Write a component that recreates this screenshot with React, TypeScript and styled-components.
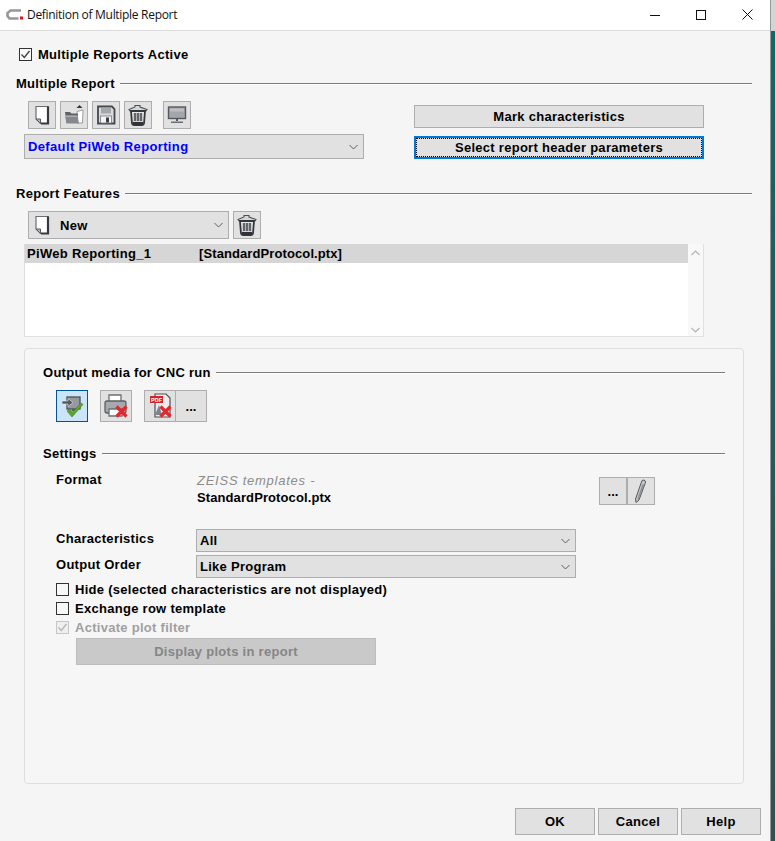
import * as React from 'react';
import styled, { createGlobalStyle } from 'styled-components';

const GlobalStyle = createGlobalStyle`
  html, body {
    margin: 0;
    padding: 0;
    background: #f5f5f5;
  }
  body {
    font-family: "Liberation Sans", Arial, sans-serif;
  }
`;

const NewIcon = ({ size = 20 }: { size?: number }) => (
  <svg width={size} height={size} viewBox="0 0 20 20">
    <path d="M4 1.500h12v17H8.500L4 14z" fill="#fff" stroke="#6a6d72" strokeWidth="1.200" />
    <path d="M16 1.500v17H9" fill="none" stroke="#35383c" strokeWidth="2.200" />
    <path d="M4 14h4.500v4.500z" fill="#b4b7bb" stroke="#55585c" strokeWidth="1" />
  </svg>
);

const OpenIcon = () => (
  <svg width="22" height="22" viewBox="0 0 22 22">
    <path d="M16.500 1l3 3h-6z" fill="#33363a" />
    <path d="M14 7.500l6-1.500-.5 13H14z" fill="#fff" stroke="#85898e" strokeWidth=".8" />
    <path d="M2 8h5l1.500 1.500H15V19H3.500z" fill="#5f6368" />
    <path d="M2 11.500h12.500L16 19.500H3.500z" fill="#85898e" />
    <path d="M2 11.500h12.500l.3 1.500H2.200z" fill="#a9acb0" />
  </svg>
);

const SaveIcon = () => (
  <svg width="20" height="20" viewBox="0 0 20 20">
    <path d="M2 1.500h14l2.500 2.500v14.500H2z" fill="#d9dadc" stroke="#44474c" strokeWidth="1.800" />
    <rect x="5" y="2.500" width="10" height="6" fill="#a3a6ab" />
    <rect x="4.500" y="11" width="11" height="7" fill="#f4f4f4" stroke="#75797e" strokeWidth=".8" />
    <rect x="10" y="12.500" width="3" height="5" fill="#3a3d42" />
  </svg>
);

const TrashIcon = () => (
  <svg width="20" height="22" viewBox="0 0 20 22">
    <path d="M1 5.500L7 3V1.500h5V3l7 2.500-1 1.500H2z" fill="#d6d7d9" stroke="#4c4f54" strokeWidth="1.100" />
    <path d="M3 7h14l-1 12.500q-.2 1.500-2 1.500H6q-1.800 0-2-1.500z" fill="#e8e8e8" stroke="#33363a" strokeWidth="1.800" />
    <path d="M7 9v8M10 9v8M13 9v8" stroke="#62666b" strokeWidth="2.400" />
    <path d="M5 19h10" stroke="#2e3135" strokeWidth="2.200" />
  </svg>
);

const MonitorIcon = () => (
  <svg width="20" height="20" viewBox="0 0 20 20">
    <rect x="1.500" y="2" width="17" height="11.500" fill="#a3a6aa" stroke="#55585c" strokeWidth="1.400" />
    <rect x="3" y="3.500" width="14" height="3" fill="#bdbfc2" />
    <path d="M9 14h2v2H9z" fill="#55585c" />
    <path d="M4 16.500h12v1.500H4z" fill="#6a6d72" />
  </svg>
);

const ScreenOkIcon = () => (
  <svg width="28" height="28" viewBox="0 0 28 28">
    <rect x="9" y="5" width="13" height="12" fill="#96999e" stroke="#4d5055" strokeWidth="1.300" />
    <path d="M4 9h6V6.500l5 4-5 4V12H4z" fill="#53575c" stroke="#eceef0" strokeWidth=".6" />
    <path d="M14 17h3v2h-3z" fill="#5b5f64" />
    <path d="M9 19l3-2 2.500 3.200L23 11l2 1.500L14 25z" fill="#5aa52c" stroke="#3f7f1c" strokeWidth=".6" />
  </svg>
);

const Cross = () => (
  <path d="M14.500 14.500L24.500 24.500M24.500 14.500L14.500 24.500" stroke="#dc2a30" strokeWidth="3.200" />
);

const PrinterOffIcon = () => (
  <svg width="28" height="28" viewBox="0 0 28 28">
    <path d="M7 3h12v7H7z" fill="#fff" stroke="#6b6f74" strokeWidth="1.300" />
    <path d="M3 11q0-2 2-2h17q2 0 2 2v8q0 2-2 2H5q-2 0-2-2z" fill="#a5a8ac" stroke="#5b5f64" strokeWidth="1.300" />
    <path d="M7 17h13v7H7z" fill="#fff" stroke="#6b6f74" strokeWidth="1.300" />
    <Cross />
  </svg>
);

const PdfOffIcon = () => (
  <svg width="28" height="28" viewBox="0 0 28 28">
    <path d="M9 2h11l4 4v19H9z" fill="#ececec" stroke="#4d5055" strokeWidth="1.200" />
    <rect x="4" y="4" width="13" height="7" fill="#d3232a" />
    <text x="10.500" y="9.800" textAnchor="middle" fontSize="5.500" fontWeight="700" fill="#fff" fontFamily="Liberation Sans">PDF</text>
    <path d="M9 23l4-10 3 10z" fill="#80848a" />
    <Cross />
  </svg>
);

const PencilIcon = () => (
  <svg width="20" height="26" viewBox="0 0 20 26">
    <path d="M11 2.500q2-1 3 .2t.1 2.800L8 22l-3 2.500-.5-3.500z" fill="#c4c6c9" stroke="#55585c" strokeWidth="1" />
    <path d="M11.500 6l1.500.8L7.500 21.500l-1.200-.6z" fill="#8c9095" />
  </svg>
);

const CheckMark = ({ $muted }: { $muted?: boolean }) => (
  <svg width="11" height="11" viewBox="0 0 11 11">
    <path d="M1.500 5.500l2.800 3L9.500 2" fill="none" stroke={$muted ? '#b5b5b5' : '#3f3f3f'} strokeWidth="1.300" />
  </svg>
);

const Chevron = () => (
  <svg width="9" height="6" viewBox="0 0 9 6">
    <path d="M.5 1l4 4 4-4" fill="none" stroke="#5f5f5f" strokeWidth="1" />
  </svg>
);

const Arrow = ({ $down }: { $down?: boolean }) => (
  <svg width="9" height="6" viewBox="0 0 9 6">
    <path d={$down ? 'M.5 1l4 4 4-4' : 'M.5 5l4-4 4 4'} fill="none" stroke="#b4b4b4" strokeWidth="1.200" />
  </svg>
);

const Page = styled.div`
  display: flex;
  width: 775px;
  height: 841px;
  overflow: hidden;
`;

const Window = styled.div`
  width: 770px;
  height: 841px;
  display: flex;
  flex-direction: column;
  background: #f5f5f5;
  color: #000;
  font-size: 13px;
  font-weight: 700;
  letter-spacing: 0.28px;
`;

const Desktop = styled.div`
  width: 5px;
  background: linear-gradient(#d4d4d4 0 31px, #0c6a66 31px, #34504f 100%);
  border-left: 1px solid #8f9a9a;
  box-sizing: border-box;
`;

const TitleBar = styled.div`
  height: 31px;
  flex: none;
  display: flex;
  align-items: center;
  background: #fff;
  border-bottom: 1px solid #dadada;
  box-sizing: border-box;
  padding: 0 0 1px 6px;
`;

const TitleLogo = styled.svg`
  width: 17px;
  height: 11px;
  margin-right: 4px;
`;

const TitleText = styled.span`
  font-family: "Open Sans", "Liberation Sans", sans-serif;
  font-size: 12px;
  font-weight: 400;
  letter-spacing: -0.3px;
  color: #111;
`;

const WindowControls = styled.div`
  margin-left: auto;
  display: flex;
`;

const WindowControl = styled.div`
  width: 46px;
  height: 29px;
  display: flex;
  align-items: center;
  justify-content: center;
`;

const Body = styled.div`
  flex: 1;
  display: flex;
  flex-direction: column;
  padding: 16px 18px 0 16px;
`;

const CheckRow = styled.label<{ $disabled?: boolean; $indent?: number; $height?: number }>`
  display: flex;
  align-items: center;
  gap: 6px;
  height: ${p => p.$height ?? 19}px;
  margin-left: ${p => p.$indent ?? 0}px;
  color: ${p => (p.$disabled ? '#a0a0a0' : '#000')};
`;

const Box = styled.span<{ $disabled?: boolean }>`
  width: 13px;
  height: 13px;
  box-sizing: border-box;
  background: ${p => (p.$disabled ? '#efefef' : '#f8f8f8')};
  border: 1px solid ${p => (p.$disabled ? '#c6c6c6' : '#333')};
  display: flex;
  align-items: center;
  justify-content: center;
`;

const SectionHead = styled.div<{ $top: number }>`
  display: flex;
  align-items: center;
  gap: 5px;
  height: 16px;
  margin-top: ${p => p.$top}px;
  &::after {
    content: '';
    flex: 1;
    height: 1px;
    background: #7a7a7a;
    box-shadow: 0 1px 0 #fff;
  }
`;

const ReportGrid = styled.div`
  display: flex;
  justify-content: space-between;
  margin: 10px 48px 0 8px;
`;

const ToolColumn = styled.div`
  display: flex;
  flex-direction: column;
  gap: 5px;
`;

const Toolbar = styled.div`
  display: flex;
  gap: 4px;
  padding-left: 4px;
`;

const IconButton = styled.button<{ $size?: number; $active?: boolean; $gapLeft?: number }>`
  width: ${p => p.$size ?? 28}px;
  height: ${p => p.$size ?? 28}px;
  flex: none;
  padding: 0;
  margin-left: ${p => p.$gapLeft ?? 0}px;
  display: flex;
  align-items: center;
  justify-content: center;
  box-sizing: border-box;
  background: ${p => (p.$active ? '#cce4f7' : '#e1e1e1')};
  border: 1px solid ${p => (p.$active ? '#005499' : '#adadad')};
  color: #000;
  font: inherit;
`;

const Combo = styled.div<{ $width: number; $height?: number; $blue?: boolean }>`
  width: ${p => p.$width}px;
  height: ${p => p.$height ?? 23}px;
  box-sizing: border-box;
  display: flex;
  align-items: center;
  gap: 8px;
  padding: 0 5px 0 3px;
  background: #e1e1e1;
  border: 1px solid #adadad;
  color: ${p => (p.$blue ? '#0000ff' : '#000')};
  letter-spacing: ${p => (p.$blue ? '0.36px' : 'inherit')};
  & > svg:last-child {
    margin-left: auto;
  }
`;

const ActionColumn = styled.div`
  display: flex;
  flex-direction: column;
  gap: 8px;
  padding-top: 4px;
`;

const ActionButton = styled.button<{ $focused?: boolean; $disabled?: boolean; $width?: number; $height?: number }>`
  width: ${p => p.$width ?? 290}px;
  height: ${p => p.$height ?? 23}px;
  box-sizing: border-box;
  padding: 0;
  font: inherit;
  letter-spacing: inherit;
  color: ${p => (p.$disabled ? '#858585' : '#000')};
  background: ${p => (p.$disabled ? '#c9c9c9' : '#e1e1e1')};
  border: ${p => (p.$focused ? '2px solid #0078d7' : p.$disabled ? '1px solid #bdbdbd' : '1px solid #adadad')};
  outline: ${p => (p.$focused ? '1px dotted #000' : 'none')};
  outline-offset: ${p => (p.$focused ? '-3px' : '0')};
`;

const FeatureRow = styled.div`
  display: flex;
  gap: 4px;
  margin: 10px 0 0 12px;
`;

const ListBox = styled.div`
  width: 680px;
  height: 93px;
  margin: 5px 0 0 8px;
  box-sizing: border-box;
  display: flex;
  background: #fff;
  border: 1px solid #e0e0e0;
  border-top: none;
  border-left-color: #dcdcdc;
`;

const ListItems = styled.div`
  flex: 1;
`;

const ListRow = styled.div`
  height: 19px;
  display: flex;
  align-items: center;
  padding-left: 2px;
  background: #d6d6d6;
  color: #000;
  letter-spacing: 0.1px;
`;

const ListName = styled.span`
  width: 172px;
  letter-spacing: 0.32px;
`;

const Scroller = styled.div`
  width: 15px;
  flex: none;
  display: flex;
  flex-direction: column;
  justify-content: space-between;
  align-items: center;
  padding: 6px 0 3px;
  background: #f8f8f8;
`;

const Panel = styled.div`
  width: 720px;
  height: 436px;
  box-sizing: border-box;
  margin: 11px 0 0 8px;
  padding: 15px 18px 0 18px;
  border: 1px solid #dedede;
  border-radius: 4px;
  background: #f6f6f6;
  display: flex;
  flex-direction: column;
`;

const MediaRow = styled.div`
  display: flex;
  margin: 10px 0 0 13px;
`;

const MediaGroup = styled.div<{ $gapLeft?: number }>`
  display: flex;
  margin-left: ${p => p.$gapLeft ?? 0}px;
`;

const FormatRow = styled.div`
  display: grid;
  grid-template-columns: 141px 1fr auto;
  margin: 9px 70px 0 13px;
`;

const FieldLabel = styled.div`
  line-height: 20px;
`;

const TemplateName = styled.div`
  line-height: 17px;
  padding-top: 2px;
  letter-spacing: 0.1px;
`;

const TemplateSource = styled.div`
  color: #8c8c8c;
  font-style: italic;
  font-weight: 400;
  letter-spacing: 0.75px;
`;

const ButtonPair = styled.div`
  display: flex;
  margin-top: 7px;
`;

const SelectRow = styled.div<{ $top: number }>`
  display: flex;
  align-items: center;
  margin: ${p => p.$top}px 0 0 13px;
`;

const SelectLabel = styled.div`
  width: 140px;
  padding-bottom: 4px;
`;

const Checks = styled.div`
  margin: 2px 0 0 13px;
`;

const DisplayWrap = styled.div`
  margin: 1px 0 0 33px;
`;

const Footer = styled.div`
  display: flex;
  justify-content: flex-end;
  gap: 3px;
  margin: 24px -9px 0 0;
`;

const App = () => {
  return (
    <Page>
      <GlobalStyle />
      <Window>
        <TitleBar>
          <TitleLogo viewBox="0 0 17 11">
            <path d="M15 1.500H4.500L1.500 4v3l2 2.500h9" fill="none" stroke="#979797" strokeWidth="2.600" />
            <rect x="14" y="7.500" width="3" height="3" fill="#e01020" />
          </TitleLogo>
          <TitleText>Definition of Multiple Report</TitleText>
          <WindowControls>
            <WindowControl>
              <svg width="10" height="10" viewBox="0 0 10 10">
                <path d="M0 5.500h10" stroke="#111" strokeWidth="1" />
              </svg>
            </WindowControl>
            <WindowControl>
              <svg width="10" height="10" viewBox="0 0 10 10">
                <rect x=".5" y=".5" width="9" height="9" fill="none" stroke="#111" strokeWidth="1" />
              </svg>
            </WindowControl>
            <WindowControl>
              <svg width="11" height="11" viewBox="0 0 11 11">
                <path d="M.5.500l10 10M10.500.500l-10 10" stroke="#111" strokeWidth="1" />
              </svg>
            </WindowControl>
          </WindowControls>
        </TitleBar>
        <Body>
          <CheckRow $indent={3} $height={15}>
            <Box>
              <CheckMark />
            </Box>
            Multiple Reports Active
          </CheckRow>
          <SectionHead $top={13}>Multiple Report</SectionHead>
          <ReportGrid>
            <ToolColumn>
              <Toolbar>
                <IconButton><NewIcon /></IconButton>
                <IconButton><OpenIcon /></IconButton>
                <IconButton><SaveIcon /></IconButton>
                <IconButton><TrashIcon /></IconButton>
                <IconButton $gapLeft={7}><MonitorIcon /></IconButton>
              </Toolbar>
              <Combo $width={340} $height={25} $blue>
                Default PiWeb Reporting
                <Chevron />
              </Combo>
            </ToolColumn>
            <ActionColumn>
              <ActionButton>Mark characteristics</ActionButton>
              <ActionButton $focused>Select report header parameters</ActionButton>
            </ActionColumn>
          </ReportGrid>

          <SectionHead $top={26}>Report Features</SectionHead>
          <FeatureRow>
            <Combo $width={201} $height={28}>
              <NewIcon />
              <span>New</span>
              <Chevron />
            </Combo>
            <IconButton><TrashIcon /></IconButton>
          </FeatureRow>
          <ListBox>
            <ListItems>
              <ListRow>
                <ListName>PiWeb Reporting_1</ListName>
                [StandardProtocol.ptx]
              </ListRow>
            </ListItems>
            <Scroller>
              <Arrow />
              <Arrow $down />
            </Scroller>
          </ListBox>

          <Panel>
            <SectionHead $top={0}>Output media for CNC run</SectionHead>
            <MediaRow>
              <IconButton $size={32} $active><ScreenOkIcon /></IconButton>
              <MediaGroup $gapLeft={12}>
                <IconButton $size={32}><PrinterOffIcon /></IconButton>
              </MediaGroup>
              <MediaGroup $gapLeft={12}>
                <IconButton $size={32}><PdfOffIcon /></IconButton>
                <IconButton $size={32} $gapLeft={-1}>...</IconButton>
              </MediaGroup>
            </MediaRow>
            <SectionHead $top={23}>Settings</SectionHead>
            <FormatRow>
              <FieldLabel>Format</FieldLabel>
              <TemplateName>
                <TemplateSource>ZEISS templates -</TemplateSource>
                StandardProtocol.ptx
              </TemplateName>
              <ButtonPair>
                <IconButton>...</IconButton>
                <IconButton><PencilIcon /></IconButton>
              </ButtonPair>
            </FormatRow>
            <SelectRow $top={23}>
              <SelectLabel>Characteristics</SelectLabel>
              <Combo $width={380}>
                All
                <Chevron />
              </Combo>
            </SelectRow>
            <SelectRow $top={3}>
              <SelectLabel>Output Order</SelectLabel>
              <Combo $width={380}>
                Like Program
                <Chevron />
              </Combo>
            </SelectRow>
            <Checks>
              <CheckRow>
                <Box />
                Hide (selected characteristics are not displayed)
              </CheckRow>
              <CheckRow>
                <Box />
                Exchange row template
              </CheckRow>
              <CheckRow $disabled>
                <Box $disabled>
                  <CheckMark $muted />
                </Box>
                Activate plot filter
              </CheckRow>
            </Checks>
            <DisplayWrap>
              <ActionButton $disabled $width={300} $height={27}>Display plots in report</ActionButton>
            </DisplayWrap>
          </Panel>

          <Footer>
            <ActionButton $width={80} $height={27}>OK</ActionButton>
            <ActionButton $width={80} $height={27}>Cancel</ActionButton>
            <ActionButton $width={80} $height={27}>Help</ActionButton>
          </Footer>
        </Body>
      </Window>
      <Desktop />
    </Page>
  );
};

export default App;
